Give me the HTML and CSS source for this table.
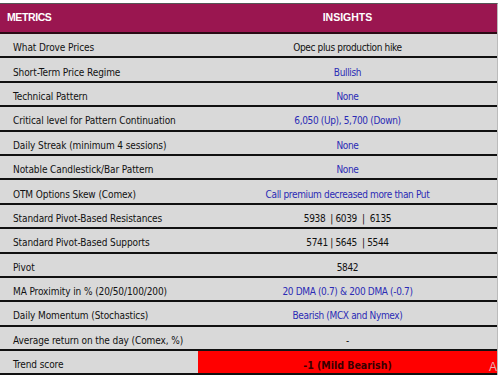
FILE: index.html
```html
<!DOCTYPE html>
<html>
<head>
<meta charset="utf-8">
<link rel="stylesheet" href="styles.css">
</head>
<body>
<div class="table">
  <div class="row head"><div class="c1">METRICS</div><div class="c2">INSIGHTS</div></div>
  <div class="row"><div class="c1">What Drove Prices</div><div class="c2">Opec plus production hike</div></div>
  <div class="row"><div class="c1">Short-Term Price Regime</div><div class="c2 blue">Bullish</div></div>
  <div class="row"><div class="c1">Technical Pattern</div><div class="c2 blue">None</div></div>
  <div class="row"><div class="c1">Critical level for Pattern Continuation</div><div class="c2 blue">6,050 (Up), 5,700 (Down)</div></div>
  <div class="row"><div class="c1">Daily Streak (minimum 4 sessions)</div><div class="c2 blue">None</div></div>
  <div class="row"><div class="c1">Notable Candlestick/Bar Pattern</div><div class="c2 blue">None</div></div>
  <div class="row"><div class="c1">OTM Options Skew (Comex)</div><div class="c2 blue">Call premium decreased more than Put</div></div>
  <div class="row"><div class="c1">Standard Pivot-Based Resistances</div><div class="c2">5938&nbsp; | 6039&nbsp; |&nbsp; 6135</div></div>
  <div class="row"><div class="c1">Standard Pivot-Based Supports</div><div class="c2">5741 | 5645&nbsp; | 5544</div></div>
  <div class="row"><div class="c1">Pivot</div><div class="c2">5842</div></div>
  <div class="row"><div class="c1">MA Proximity in % (20/50/100/200)</div><div class="c2 blue">20 DMA (0.7) &amp; 200 DMA (-0.7)</div></div>
  <div class="row"><div class="c1">Daily Momentum (Stochastics)</div><div class="c2 blue">Bearish (MCX and Nymex)</div></div>
  <div class="row"><div class="c1">Average return on the day (Comex, %)</div><div class="c2">-</div></div>
  <div class="row last"><div class="c1">Trend score</div><div class="c2 score">-1 (Mild Bearish)<span class="mark">A</span></div></div>
</div>
</body>
</html>
```
FILE: styles.css
```css
html, body {
  margin: 0;
  padding: 0;
  background: #ffffff;
}
body {
  width: 500px;
  height: 377px;
  overflow: hidden;
  font-family: "DejaVu Sans Condensed", "DejaVu Sans", sans-serif;
  font-size: 10px;
  color: #111111;
}
.table {
  margin-top: 3px;
  width: 497px;
  border-top: 1px solid #555;
  border-right: 1px solid #bbb;
}
.row {
  display: flex;
  height: 24.4px;
  box-sizing: border-box;
  border-bottom: 2px solid #111;
  background: #d9d9d9;
}
.row.head {
  height: 30px;
  background: #9a1650;
  color: #ffffff;
  font-family: "Liberation Sans", Arial, sans-serif;
  font-weight: bold;
  font-size: 10.5px;
  border-bottom: 2px solid #2a0a14;
}
.c1 {
  width: 198px;
  flex: none;
  display: flex;
  align-items: center;
  padding-left: 13px;
  padding-top: 5px;
  box-sizing: border-box;
  letter-spacing: -0.1px;
}
.head .c1 {
  padding-left: 7px;
  padding-top: 0;
  padding-bottom: 2px;
  letter-spacing: -0.4px;
}
.c2 {
  flex: 1;
  display: flex;
  align-items: center;
  justify-content: center;
  padding-top: 5px;
  position: relative;
  letter-spacing: -0.35px;
}
.head .c2 {
  padding-top: 0;
  padding-bottom: 2px;
  letter-spacing: 0;
}
.blue {
  color: #2b2bb5;
}
.score {
  background: #ff0000;
  color: #3a0000;
  font-weight: bold;
  font-size: 10.5px;
  letter-spacing: 0;
}
.mark {
  position: absolute;
  right: 0;
  bottom: -1px;
  font-weight: normal;
  font-family: "Liberation Sans", Arial, sans-serif;
  font-size: 12px;
  color: #e8b0b0;
}
```
